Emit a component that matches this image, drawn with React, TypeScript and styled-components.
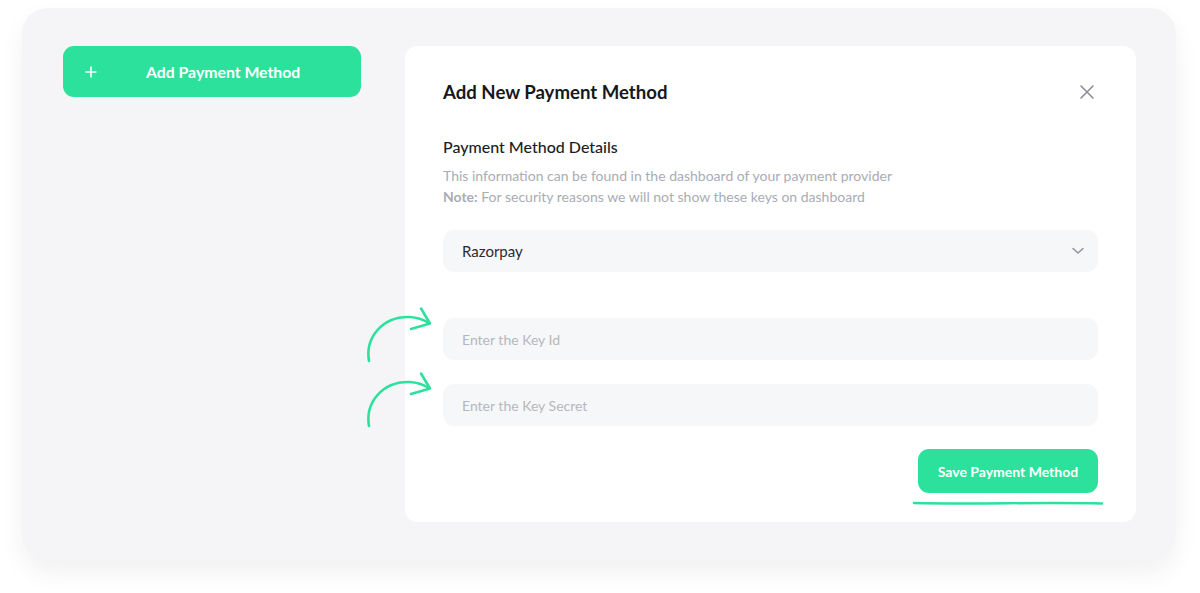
import styled, { createGlobalStyle } from "styled-components";

const GlobalStyle = createGlobalStyle`
  * {
    box-sizing: border-box;
  }

  body {
    margin: 0;
    background: #ffffff;
    font-family: "Lato", "Open Sans", sans-serif;
    -webkit-font-smoothing: antialiased;
  }
`;

const green = "#2be19c";

const Page = styled.div`
  width: 1200px;
  height: 593px;
  padding: 8px 24px 0 22px;
`;

const Panel = styled.div`
  width: 1154px;
  height: 552px;
  background: #f5f5f7;
  border-radius: 26px;
  box-shadow: 0 12px 26px rgba(20, 20, 40, 0.06);
  padding: 38px 0 0 41px;
  display: flex;
  align-items: flex-start;
  gap: 44px;
  position: relative;
`;

const AddButton = styled.button`
  width: 298px;
  height: 51px;
  border: none;
  border-radius: 11px;
  background: ${green};
  color: #ffffff;
  display: flex;
  align-items: center;
  padding: 0 0 0 22px;
  gap: 49px;
  font-family: inherit;
  font-size: 15.8px;
  font-weight: 700;
  cursor: pointer;
`;

const Card = styled.div`
  width: 731px;
  height: 476px;
  background: #ffffff;
  border-radius: 13px;
  padding: 34px 38px 0 38px;
  display: flex;
  flex-direction: column;
`;

const Header = styled.div`
  display: flex;
  align-items: center;
  justify-content: space-between;
`;

const Title = styled.h2`
  margin: 0;
  font-size: 18.6px;
  line-height: 24px;
  font-weight: 700;
  color: #16181d;
`;

const CloseButton = styled.button`
  width: 22px;
  height: 22px;
  border: none;
  background: none;
  padding: 0;
  display: flex;
  align-items: center;
  justify-content: center;
  cursor: pointer;
`;

const SectionTitle = styled.h3`
  margin: 33px 0 0;
  font-size: 16px;
  line-height: 20px;
  font-weight: 500;
  color: #1b1d22;
`;

const Description = styled.p`
  margin: 8px 0 0;
  font-size: 14px;
  line-height: 21px;
  color: #a9acb4;

  strong {
    font-weight: 700;
  }
`;

const Field = styled.div<{ $gap: number }>`
  margin-top: ${(p) => p.$gap}px;
  height: 42px;
  border-radius: 11px;
  background: #f6f7f9;
  display: flex;
  align-items: center;
  justify-content: space-between;
  padding: 0 14px 0 19px;
`;

const FieldText = styled.span<{ $placeholder?: boolean }>`
  font-size: ${(p) => (p.$placeholder ? 14 : 15)}px;
  color: ${(p) => (p.$placeholder ? "#b5b7be" : "#2a2c31")};
`;

const Footer = styled.div`
  margin-top: 23px;
  display: flex;
  justify-content: flex-end;
`;

const SaveWrap = styled.div`
  display: flex;
  flex-direction: column;
  align-items: center;
  margin-right: -6px;
`;

const SaveButton = styled.button`
  width: 180px;
  height: 44px;
  border: none;
  border-radius: 11px;
  background: ${green};
  color: #ffffff;
  font-family: inherit;
  font-size: 14px;
  font-weight: 700;
  cursor: pointer;
`;

const Underline = styled.svg`
  display: block;
  margin-top: 7px;
`;

const Arrow = styled.svg<{ $top: number }>`
  position: absolute;
  left: 340px;
  top: ${(p) => p.$top}px;
  overflow: visible;
`;

function CurvedArrow({ top }: { top: number }) {
  return (
    <Arrow $top={top} width="70" height="60" viewBox="0 0 70 60">
      <path
        d="M7 53 C3 30 20 8 48 9 C56 9.5 62 12 67 15"
        fill="none"
        stroke={green}
        strokeWidth="2.6"
        strokeLinecap="round"
      />
      <path
        d="M59 0.5 L68 15.5 L49 21"
        fill="none"
        stroke={green}
        strokeWidth="2.6"
        strokeLinecap="round"
        strokeLinejoin="round"
      />
    </Arrow>
  );
}

function App() {
  return (
    <>
      <GlobalStyle />
      <Page>
        <Panel>
          <AddButton>
            <svg width="12" height="12" viewBox="0 0 12 12">
              <path d="M6 0.5V11.5M0.5 6H11.5" stroke="#fff" strokeWidth="1.6" />
            </svg>
            <span>Add Payment Method</span>
          </AddButton>

          <Card>
            <Header>
              <Title>Add New Payment Method</Title>
              <CloseButton aria-label="Close">
                <svg width="14" height="14" viewBox="0 0 14 14">
                  <path d="M1 1L13 13M13 1L1 13" stroke="#8c8f97" strokeWidth="1.6" strokeLinecap="round" />
                </svg>
              </CloseButton>
            </Header>

            <SectionTitle>Payment Method Details</SectionTitle>
            <Description>
              This information can be found in the dashboard of your payment provider
              <br />
              <strong>Note:</strong> For security reasons we will not show these keys on dashboard
            </Description>

            <Field $gap={23}>
              <FieldText>Razorpay</FieldText>
              <svg width="12" height="8" viewBox="0 0 12 8">
                <path d="M1 1.5L6 6L11 1.5" fill="none" stroke="#8c8f97" strokeWidth="1.4" strokeLinecap="round" strokeLinejoin="round" />
              </svg>
            </Field>

            <Field $gap={46}>
              <FieldText $placeholder>Enter the Key Id</FieldText>
            </Field>

            <Field $gap={24}>
              <FieldText $placeholder>Enter the Key Secret</FieldText>
            </Field>

            <Footer>
              <SaveWrap>
                <SaveButton>Save Payment Method</SaveButton>
                <Underline width="192" height="6" viewBox="0 0 192 6">
                  <path d="M2 3 C60 4.5 130 2 190 3.5" fill="none" stroke={green} strokeWidth="2.4" strokeLinecap="round" />
                </Underline>
              </SaveWrap>
            </Footer>
          </Card>

          <CurvedArrow top={300} />
          <CurvedArrow top={365} />
        </Panel>
      </Page>
    </>
  );
}

export default App;
